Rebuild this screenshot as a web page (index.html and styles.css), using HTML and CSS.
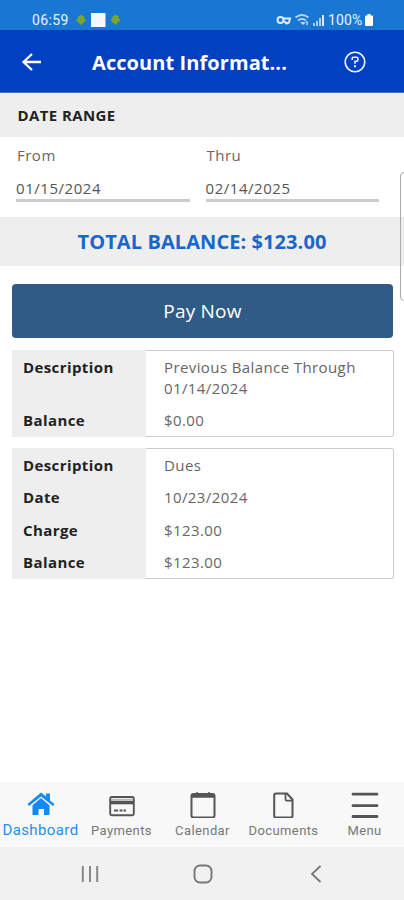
FILE: index.html
```html
<!DOCTYPE html>
<html lang="en">
<head>
<meta charset="utf-8">
<title>Account Information</title>
<link rel="stylesheet" href="styles.css">
</head>
<body>
<div class="status">
  <span class="time">06:59</span>
  <svg class="notes" width="48" height="16" viewBox="0 0 48 16">
    <path d="M6 2.500l2 1.500h1v2l2 2-2 2v1H8l-2 2-2-2H3v-1L1 8l2-2V4h1z" fill="#7da52b"/>
    <rect x="16" y="1" width="14.500" height="14" fill="#f5f8ff"/>
    <path d="M40.500 2.500l2 1.500h1v2l2 2-2 2v1h-1l-2 2-2-2h-1v-1l-2-2 2-2V4h1z" fill="#7da52b"/>
  </svg>
  <svg class="signals" width="50" height="16" viewBox="0 0 50 16" fill="none">
    <g stroke="#dcebfa" stroke-width="2"><circle cx="4.500" cy="8" r="3"/><path d="M7.500 6.500h6.500l-1 4-2.500 1L8 9"/></g>
    <g stroke="#b9d7f3" stroke-width="1.800"><path d="M19.500 5.500q6.500-5 13 0M22 8.500q4-3 8 0"/><path d="M24 10l3 3 3-3z" fill="#b9d7f3" stroke="none"/><path d="M31 9v4" stroke-width="1.500"/></g>
    <g fill="#a9cdf0"><path d="M37 11h2v3h-2zM40 9h2v5h-2zM43 6h2v8h-2z"/><path d="M46 3h2v11h-2z" fill="#dcebfa"/></g>
  </svg>
  <span class="percent">100%</span>
  <svg class="battery" width="8" height="12" viewBox="0 0 8 12"><path d="M2.500 0h3v1.500H7q1 0 1 1V11q0 1-1 1H1q-1 0-1-1V2.500q0-1 1-1h1.500z" fill="#fff"/></svg>
</div>
<header class="header">
  <svg class="back" width="20" height="20" viewBox="0 0 20 20" fill="none" stroke="#fff" stroke-width="2.300"><path d="M20 10H2.500M11 2L2.500 10l8.500 8"/></svg>
  <h1>Account Informat...</h1>
  <svg class="help" width="22" height="22" viewBox="0 0 22 22" fill="none" stroke="#eef3ff" stroke-width="1.600"><circle cx="11" cy="11" r="9.800"/><path d="M8.200 9V7.200q0-1 1-1h3.600q1 0 1 1v2q0 1-1 1H11v2.600"/><path d="M11 14.300v1.900" stroke-width="2"/></svg>
</header>
<main>
  <h2 class="band">DATE RANGE</h2>
  <section class="dates">
    <div class="field"><label>From</label><div class="value">01/15/2024</div></div>
    <div class="field"><label>Thru</label><div class="value">02/14/2025</div></div>
  </section>
  <div class="total">TOTAL BALANCE: $123.00</div>
  <button class="pay">Pay Now</button>
  <dl class="card first">
    <dt>Description</dt><dd>Previous Balance Through<br>01/14/2024</dd>
    <dt>Balance</dt><dd>$0.00</dd>
  </dl>
  <dl class="card second">
    <dt>Description</dt><dd>Dues</dd>
    <dt>Date</dt><dd>10/23/2024</dd>
    <dt>Charge</dt><dd>$123.00</dd>
    <dt>Balance</dt><dd>$123.00</dd>
  </dl>
</main>
<div class="edge"></div>
<nav class="tabs">
  <a class="active"><svg width="28" height="28" viewBox="0 0 28 28"><path d="M.5 14L14 2.500l5 4V3.500h4v7l4.500 3.500-1.500 2L14 6.500 2 16z" fill="#168af0"/><path d="M5.500 15.300L14 8l8.500 7.300V25H17v-6h-5.500v6h-6z" fill="#168af0"/></svg><span>Dashboard</span></a>
  <a><svg width="28" height="28" viewBox="0 0 28 28" fill="none" stroke="#555"><rect x="2.200" y="7" width="23.600" height="18.200" rx="1.500" stroke-width="1.900"/><path d="M2 12.500h24" stroke-width="3.600"/><path d="M3 9.500h22" stroke="#bbb" stroke-width="1.400"/><path d="M6 20.500h4M11.500 20.500h3M15.500 20.500h2.500" stroke-width="2"/></svg><span>Payments</span></a>
  <a><svg width="28" height="28" viewBox="0 0 28 28" fill="none" stroke="#555"><rect x="2.500" y="4" width="23" height="23.500" rx="2" stroke-width="2"/><path d="M3 6h22" stroke-width="3.500"/><path d="M8 2.300v3M20 2.300v3" stroke-width="2"/></svg><span>Calendar</span></a>
  <a><svg width="28" height="28" viewBox="0 0 28 28" fill="none" stroke="#555" stroke-width="2"><path d="M6 3.500h11l5.500 6V26q0 1.500-1.500 1.500H6Q4.200 27.500 4.200 26V5.300Q4.200 3.500 6 3.500z"/><path d="M15.500 4v5.500q0 1.200 1.200 1.200H22" stroke-width="1.700"/></svg><span>Documents</span></a>
  <a><svg width="28" height="28" viewBox="0 0 28 28" fill="none" stroke="#555" stroke-width="2.800" stroke-linecap="round"><path d="M2 4.200h24M2 15.700h24M2 26.500h24"/></svg><span>Menu</span></a>
</nav>
<div class="system">
  <svg width="18" height="20" viewBox="0 0 18 20" stroke="#888" stroke-width="2"><path d="M1.800 2v16M9 2v16M16.200 2v16"/></svg>
  <svg width="20" height="20" viewBox="0 0 20 20" fill="none" stroke="#777" stroke-width="1.900"><rect x="1.500" y="1.500" width="17" height="17" rx="5.500"/></svg>
  <svg width="12" height="20" viewBox="0 0 12 20" fill="none" stroke="#777" stroke-width="1.800"><path d="M10.500 2L2 10l8.500 8"/></svg>
</div>
</body>
</html>
```
FILE: styles.css
```css
* { box-sizing: border-box; }
body { margin: 0; width: 404px; height: 900px; overflow: hidden; display: flex; flex-direction: column; background: #fff; color: #666; font-family: "Open Sans", sans-serif; position: relative; }
h1, h2, dl, dt, dd { margin: 0; }
svg { flex: none; display: block; }
span { white-space: nowrap; }
.status { height: 30px; flex: none; background: #1976d2; display: flex; align-items: center; padding: 10px 30px 0 32px; color: #eaf3fd; font: 14px Roboto, sans-serif; }
.time { width: 43px; letter-spacing: .4px; }
.signals { margin-left: 153px; }
.percent { margin-left: 2px; width: 36px; letter-spacing: .1px; }
.battery { margin-left: 1px; }
.header { height: 63px; flex: none; background: #0040c1; border-bottom: 1px solid #4b6fce; display: flex; align-items: center; padding: 1px 37px 0 21px; color: #fff; }
.header h1 { margin-left: 51px; padding-top: 2px; width: 252px; font-size: 20px; font-weight: 700; line-height: 30px; letter-spacing: .08px; white-space: nowrap; }
main { flex: 1; display: flex; flex-direction: column; }
.band { height: 44px; background: #eee; padding: 1px 17.500px 0; line-height: 43px; font-size: 15px; font-weight: 700; letter-spacing: .4px; color: #222; }
.dates { height: 80px; display: flex; gap: 16px; padding: 8px 25px 0 16px; }
.field { flex: 1; font-size: 15px; }
.field label { display: block; line-height: 21px; padding-left: 1px; letter-spacing: .5px; }
.value { height: 36px; border-bottom: 3px solid #ccc; line-height: 44px; color: #555; letter-spacing: .55px; }
.total { height: 49px; background: #eee; color: #1767cc; text-align: center; font-size: 20px; line-height: 49px; font-weight: 700; letter-spacing: .08px; }
.pay { height: 54px; margin: 18px 11px 0 12px; border: 0; border-radius: 4px; background: #305b86; color: #fff; font: 19px "Open Sans", sans-serif; letter-spacing: .2px; }
.card { border: 1px solid #ccc; border-left: 0; border-radius: 0 3px 3px 0; display: grid; grid-template-columns: 134px 1fr; font-size: 15px; line-height: 21px; letter-spacing: .4px; color: #666; background: #fff; position: relative; margin: 12px 10px 0 12px; }
.first { height: 87px; margin-top: 12px; grid-template-rows: 53px 32px; }
.second { height: 131px; margin-top: 11px; grid-template-rows: 32px 33px 32px 32px; }
.card dt { font-weight: 700; color: #222; padding: 6px 0 0 11px; background: #eee; position: relative; z-index: 1; }
.card dd { padding: 6px 0 0 18px; }
.card::before { content: ""; position: absolute; left: 0; top: -1px; bottom: -1px; width: 134px; background: #eee; }
.edge { position: absolute; left: 400px; top: 172px; width: 8px; height: 129px; border: 1px solid #aaa; border-radius: 4px; }
.tabs { height: 65px; flex: none; background: #f8f8f8; display: grid; grid-template-columns: repeat(5, 81px); }
.tabs a { display: flex; flex-direction: column; align-items: center; padding-top: 8px; color: #777; font: 13px/16px Roboto, sans-serif; letter-spacing: .4px; }
.tabs a span { margin-top: 5px; }
.tabs .active { color: #2590ed; font-size: 15px; letter-spacing: .4px; }
.tabs .active span { margin-top: 4px; }
.system { height: 53px; flex: none; background: #f1f1f1; display: flex; align-items: center; padding: 1px 0 0 81px; }
.system svg + svg { margin-left: 94px; }
.system svg:last-child { margin-left: 97px; }
```
